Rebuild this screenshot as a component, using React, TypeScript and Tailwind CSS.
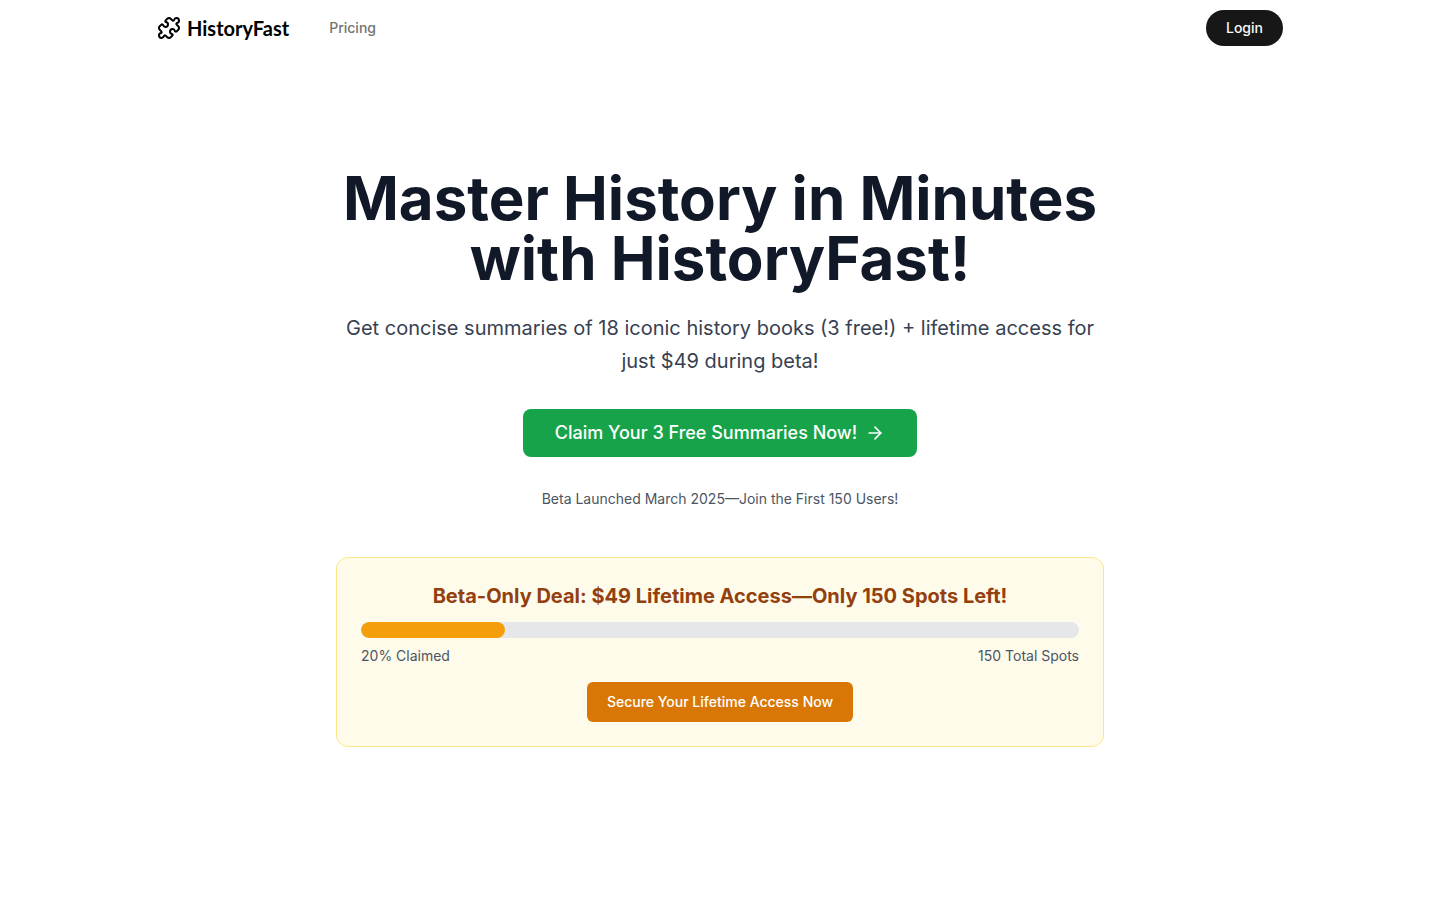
import { ArrowRight, Puzzle } from 'lucide-react'

const claimed = 20

function Navbar() {
  return (
    <header className="sticky top-0 z-40 w-full bg-white">
      <div className="mx-auto flex h-14 max-w-[1126px] items-center justify-between">
        <nav className="flex items-center gap-10">
          <a href="#" className="flex items-center gap-1.5 text-black">
            <Puzzle className="size-6" />
            <span className="font-['Lato',sans-serif] text-xl font-bold">HistoryFast</span>
          </a>
          <a href="#pricing" className="text-sm font-medium text-neutral-500 hover:text-neutral-700">
            Pricing
          </a>
        </nav>
        <button className="h-9 rounded-full bg-neutral-900 px-5 text-sm font-medium text-neutral-50 hover:bg-neutral-800">
          Login
        </button>
      </div>
    </header>
  )
}

function BetaDeal() {
  return (
    <div className="mt-12 rounded-xl border border-[#fde68a] bg-[#fffbeb] p-6">
      <h2 className="mb-3 text-xl font-bold text-[#92400e]">
        Beta-Only Deal: $49 Lifetime Access—Only 150 Spots Left!
      </h2>
      <div className="mb-2 h-4 w-full overflow-hidden rounded-full bg-[#e5e7eb]">
        <div className="h-full rounded-full bg-[#f59e0b]" style={{ width: `${claimed}%` }} />
      </div>
      <div className="mb-4 flex justify-between text-sm text-[#4b5563]">
        <span>{claimed}% Claimed</span>
        <span>150 Total Spots</span>
      </div>
      <button className="h-10 rounded-md bg-[#d97706] px-5 text-sm font-medium text-white hover:bg-[#b45309]">
        Secure Your Lifetime Access Now
      </button>
    </div>
  )
}

export default function App() {
  return (
    <div className="min-h-screen bg-white font-['Inter',sans-serif]">
      <Navbar />
      <main className="mx-auto max-w-3xl pt-28 pb-28 text-center">
        <h1 className="text-6xl font-bold text-[#111827]">
          Master History in Minutes with HistoryFast!
        </h1>
        <p className="mt-6 text-xl leading-relaxed text-[#374151]">
          Get concise summaries of 18 iconic history books (3 free!) + lifetime access for just $49 during beta!
        </p>
        <button className="mt-8 inline-flex h-12 items-center gap-2 rounded-lg bg-[#16a34a] px-8 text-lg font-medium text-white hover:bg-[#15803d]">
          Claim Your 3 Free Summaries Now!
          <ArrowRight className="size-5" />
        </button>
        <p className="mt-8 text-sm text-[#4b5563]">
          Beta Launched March 2025—Join the First 150 Users!
        </p>
        <BetaDeal />
      </main>
    </div>
  )
}
